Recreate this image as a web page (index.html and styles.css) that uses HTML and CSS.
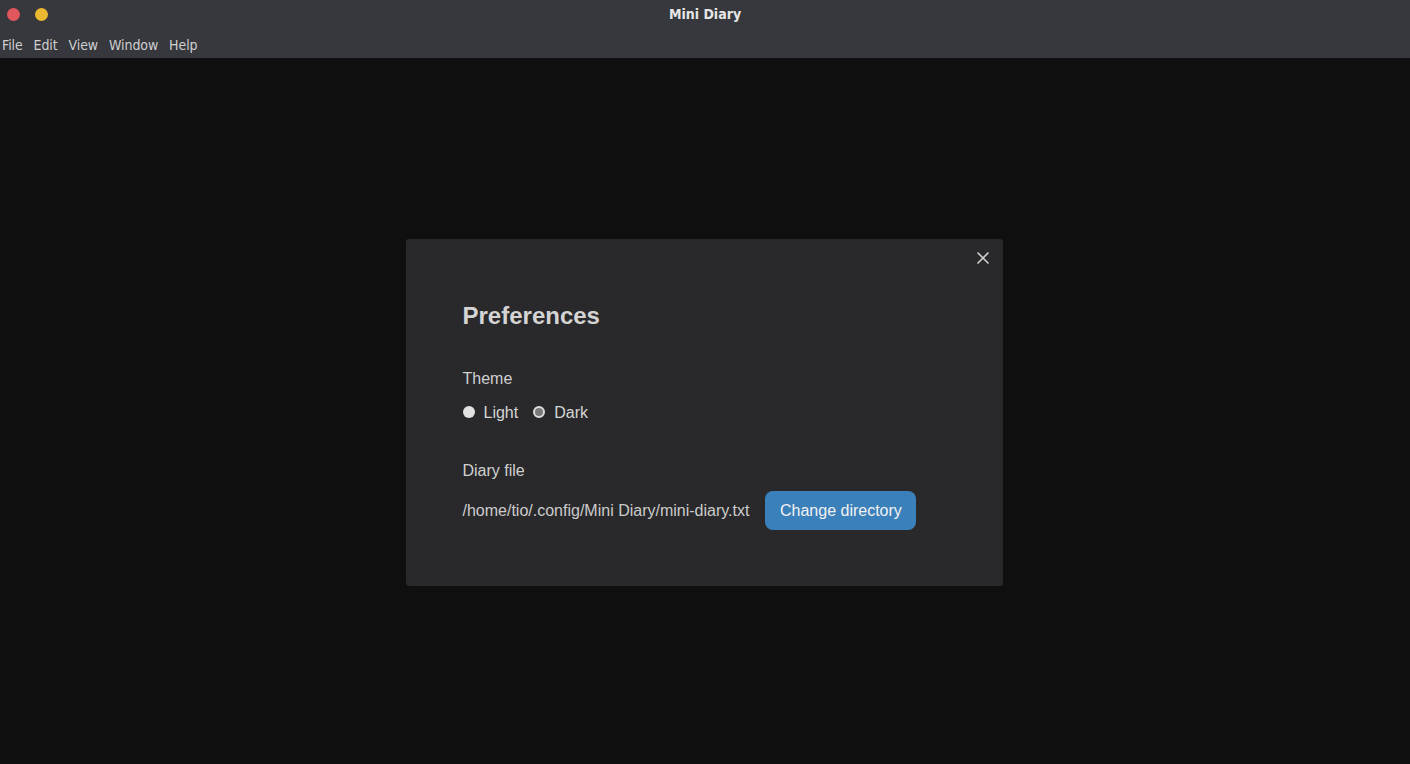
FILE: index.html
```html
<!DOCTYPE html>
<html>
<head>
<meta charset="utf-8">
<title>Mini Diary</title>
<link rel="stylesheet" href="styles.css">
</head>
<body>
<div class="app">
  <header class="titlebar">
    <div class="lights">
      <span class="light red"></span>
      <span class="light yellow"></span>
    </div>
    <div class="title">Mini Diary</div>
  </header>
  <nav class="menubar">
    <span>File</span>
    <span>Edit</span>
    <span>View</span>
    <span>Window</span>
    <span>Help</span>
  </nav>
  <main class="stage">
    <section class="modal">
      <button class="close" aria-label="Close">
        <svg width="14" height="14" viewBox="0 0 14 14"><path d="M1.5 1.5L12.5 12.5M12.5 1.5L1.5 12.5" stroke="#d0d0d0" stroke-width="1.6" fill="none"/></svg>
      </button>
      <h1 class="heading">Preferences</h1>
      <div class="group">
        <div class="label">Theme</div>
        <div class="radios">
          <label class="radio"><span class="dot"></span>Light</label>
          <label class="radio"><span class="dot checked"></span>Dark</label>
        </div>
      </div>
      <div class="group">
        <div class="label">Diary file</div>
        <div class="filerow">
          <span class="path">/home/tio/.config/Mini Diary/mini-diary.txt</span>
          <button class="btn">Change directory</button>
        </div>
      </div>
    </section>
  </main>
</div>
</body>
</html>
```
FILE: styles.css
```css
* { box-sizing: border-box; }
html, body { margin: 0; height: 100%; }
body { background: #0f0f0f; font-family: "Liberation Sans", Arial, sans-serif; }
.app { display: flex; flex-direction: column; height: 764px; }
.titlebar {
  height: 33px; background: #36383d; display: flex; align-items: center; position: relative;
}
.lights { display: flex; gap: 15px; padding-left: 7px; padding-bottom: 4px; }
.light { width: 13px; height: 13px; border-radius: 50%; display: block; }
.red { background: #e0575e; }
.yellow { background: #eab92f; }
.title {
  position: absolute; left: 0; right: 0; top: 0; height: 28px; line-height: 28px; text-align: center;
  color: #e6e6e6; font-family: "DejaVu Sans Condensed", "DejaVu Sans", sans-serif; font-weight: bold; font-size: 14px;
}
.menubar {
  height: 25px; background: #36383d; display: flex; align-items: center; gap: 11px; padding-left: 2px; padding-bottom: 2px;
  color: #cfcfcf; font-family: "DejaVu Sans Condensed", "DejaVu Sans", sans-serif; font-size: 14px; letter-spacing: -0.1px;
}
.stage { flex: 1; display: flex; align-items: flex-start; justify-content: center; padding-top: 181px; padding-right: 2px; }
.modal {
  position: relative; width: 597px; height: 347px; background: #29292b; border-radius: 3px;
  padding: 59px 57px 0 57px; color: #d8d8d8;
}
.close {
  position: absolute; right: 13px; top: 12px; width: 14px; height: 14px; padding: 0; border: 0; background: none;
  display: block;
}
.close svg { display: block; }
.heading { margin: 0 0 33px; font-size: 24px; font-weight: bold; color: #d4d4d4; line-height: 36px; }
.group { margin-bottom: 34px; }
.label { font-size: 16px; line-height: 24px; color: #d0d0d0; margin-bottom: 10px; }
.radios { display: flex; gap: 15px; font-size: 16px; line-height: 24px; }
.radio { display: flex; align-items: center; gap: 9px; color: #d6d6d6; }
.dot { width: 12px; height: 12px; border-radius: 50%; background: #e2e2e2; display: block; margin-top: -3px; }
.dot.checked { background: #7a7a7a; border: 2.5px solid #dcdcdc; }
.filerow { display: flex; align-items: center; gap: 16px; margin-top: -2px; }
.path { font-size: 16px; color: #cccccc; }
.btn {
  font-family: "Liberation Sans", Arial, sans-serif; font-size: 16px; color: #f2f2f2; background: #3a80ba;
  border: 0; border-radius: 8px; height: 39px; padding: 0 14px 0 14px; width: 151px;
}
```
